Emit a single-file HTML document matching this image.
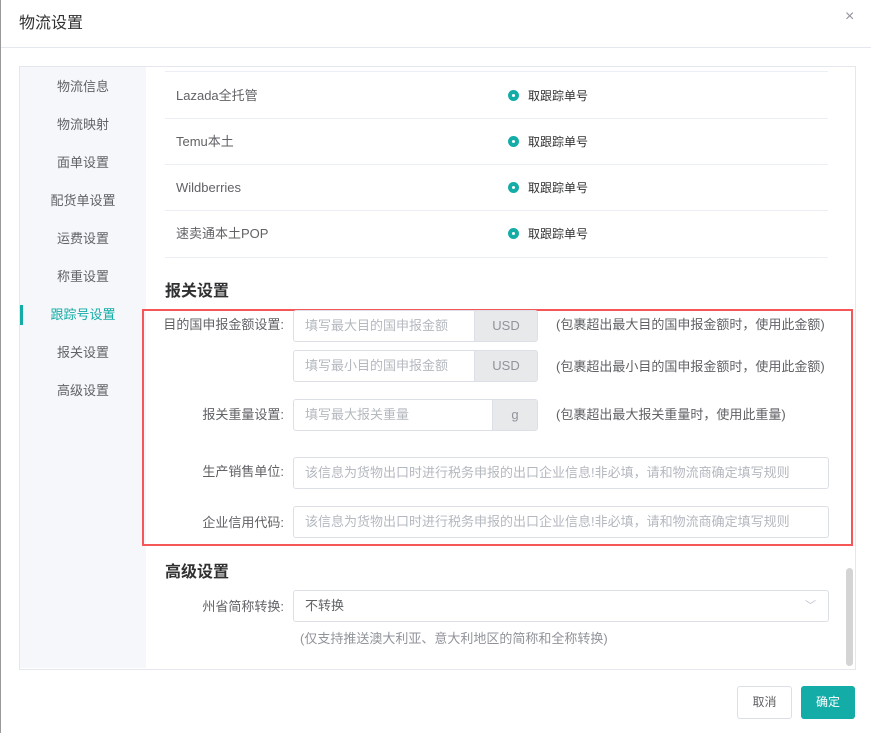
<!DOCTYPE html>
<html><head><meta charset="utf-8"><style>
*{box-sizing:border-box;margin:0;padding:0}
body{width:871px;height:733px;background:#fff;font-family:"Liberation Sans","Noto Sans CJK SC",sans-serif;color:#606266;position:relative;overflow:hidden;font-size:13px;line-height:16px}
.a{position:absolute}
.side{left:20px;top:67px;width:126px;height:601px;background:#f5f7fa}
.si{position:absolute;left:20px;width:126px;text-align:center;font-size:13px;color:#606266}
.row{position:absolute;left:165px;width:663px;height:1px;background:#ebeef5}
.rt{position:absolute;left:176px;font-size:13px;color:#606266}
.rad{position:absolute;left:508px;width:11px;height:11px;border-radius:50%;background:#14aca7}
.rad:after{content:"";position:absolute;left:4px;top:4px;width:3px;height:3px;border-radius:50%;background:#fff}
.rl{position:absolute;left:528px;font-size:12px;color:#303133}
.lab{position:absolute;right:587px;font-size:13px;color:#606266;text-align:right}
.inp{position:absolute;left:293px;height:32px;border:1px solid #dcdfe6;border-radius:3px;background:#fff;color:#b4b8bf;font-size:13px;line-height:30px;padding-left:11px;overflow:hidden;white-space:nowrap}
.add{position:absolute;right:0;top:0;bottom:0;background:#e8e9eb;color:#909399;text-align:center;border-left:1px solid #dcdfe6}
.note{position:absolute;left:556px;font-size:13px;color:#606266}
h3{position:absolute;left:165px;font-size:16px;line-height:20px;font-weight:bold;color:#303133}
</style></head><body>
<div class="a" style="left:0;top:0;width:1px;height:733px;background:#999"></div>
<div class="a" style="left:19px;top:14px;font-size:16px;line-height:20px;color:#303133">物流设置</div>
<div class="a" style="left:845px;top:9px;font-size:16px;color:#909399">×</div>
<div class="a" style="left:1px;top:47px;width:870px;height:1px;background:#e4e7ed"></div>
<div class="a" style="left:19px;top:66px;width:837px;height:604px;border:1px solid #e4e7ed"></div>
<div class="a side"></div>
<div class="si" style="top:79px">物流信息</div>
<div class="si" style="top:117px">物流映射</div>
<div class="si" style="top:155px">面单设置</div>
<div class="si" style="top:193px">配货单设置</div>
<div class="si" style="top:231px">运费设置</div>
<div class="si" style="top:269px">称重设置</div>
<div class="si" style="top:307px;color:#14aca7">跟踪号设置</div>
<div class="a" style="left:20px;top:305px;width:3px;height:20px;background:#14aca7"></div>
<div class="si" style="top:345px">报关设置</div>
<div class="si" style="top:383px">高级设置</div>

<div class="row" style="top:71px"></div>
<div class="row" style="top:118px"></div>
<div class="row" style="top:164px"></div>
<div class="row" style="top:210px"></div>
<div class="row" style="top:257px"></div>
<div class="rt" style="top:88px">Lazada全托管</div>
<div class="rt" style="top:134px">Temu本土</div>
<div class="rt" style="top:180px">Wildberries</div>
<div class="rt" style="top:226px">速卖通本土POP</div>
<div class="rad" style="top:90px"></div><div class="rl" style="top:88px">取跟踪单号</div>
<div class="rad" style="top:136px"></div><div class="rl" style="top:134px">取跟踪单号</div>
<div class="rad" style="top:182px"></div><div class="rl" style="top:180px">取跟踪单号</div>
<div class="rad" style="top:228px"></div><div class="rl" style="top:226px">取跟踪单号</div>

<h3 style="top:282px">报关设置</h3>
<div class="a" style="left:142px;top:309px;width:711px;height:237px;border:2px solid #f55657"></div>
<div class="lab" style="top:317px">目的国申报金额设置:</div>
<div class="inp" style="top:310px;width:245px">填写最大目的国申报金额<div class="add" style="width:63px">USD</div></div>
<div class="note" style="top:317px">(包裹超出最大目的国申报金额时，使用此金额)</div>
<div class="inp" style="top:350px;width:245px">填写最小目的国申报金额<div class="add" style="width:63px">USD</div></div>
<div class="note" style="top:359px">(包裹超出最小目的国申报金额时，使用此金额)</div>
<div class="lab" style="top:407px">报关重量设置:</div>
<div class="inp" style="top:399px;width:245px">填写最大报关重量<div class="add" style="width:45px">g</div></div>
<div class="note" style="top:407px">(包裹超出最大报关重量时，使用此重量)</div>
<div class="lab" style="top:464px">生产销售单位:</div>
<div class="inp" style="top:457px;width:536px">该信息为货物出口时进行税务申报的出口企业信息!非必填，请和物流商确定填写规则</div>
<div class="lab" style="top:515px">企业信用代码:</div>
<div class="inp" style="top:506px;width:536px">该信息为货物出口时进行税务申报的出口企业信息!非必填，请和物流商确定填写规则</div>

<h3 style="top:563px">高级设置</h3>
<div class="lab" style="top:599px">州省简称转换:</div>
<div class="inp" style="top:590px;width:536px;color:#606266">不转换<span style="position:absolute;right:12px;top:0;color:#c0c4cc;font-size:11px">﹀</span></div>
<div class="a" style="left:300px;top:631px;font-size:13px;color:#909399">(仅支持推送澳大利亚、意大利地区的简称和全称转换)</div>
<div class="a" style="left:846px;top:568px;width:7px;height:98px;border-radius:4px;background:#d4d4d4"></div>

<div class="a" style="left:737px;top:686px;width:55px;height:33px;border:1px solid #dcdfe6;border-radius:3px;text-align:center;line-height:31px;color:#606266;font-size:12px">取消</div>
<div class="a" style="left:801px;top:686px;width:54px;height:33px;background:#14aca7;border-radius:3px;text-align:center;line-height:33px;color:#fff;font-size:12px">确定</div>
</body></html>
